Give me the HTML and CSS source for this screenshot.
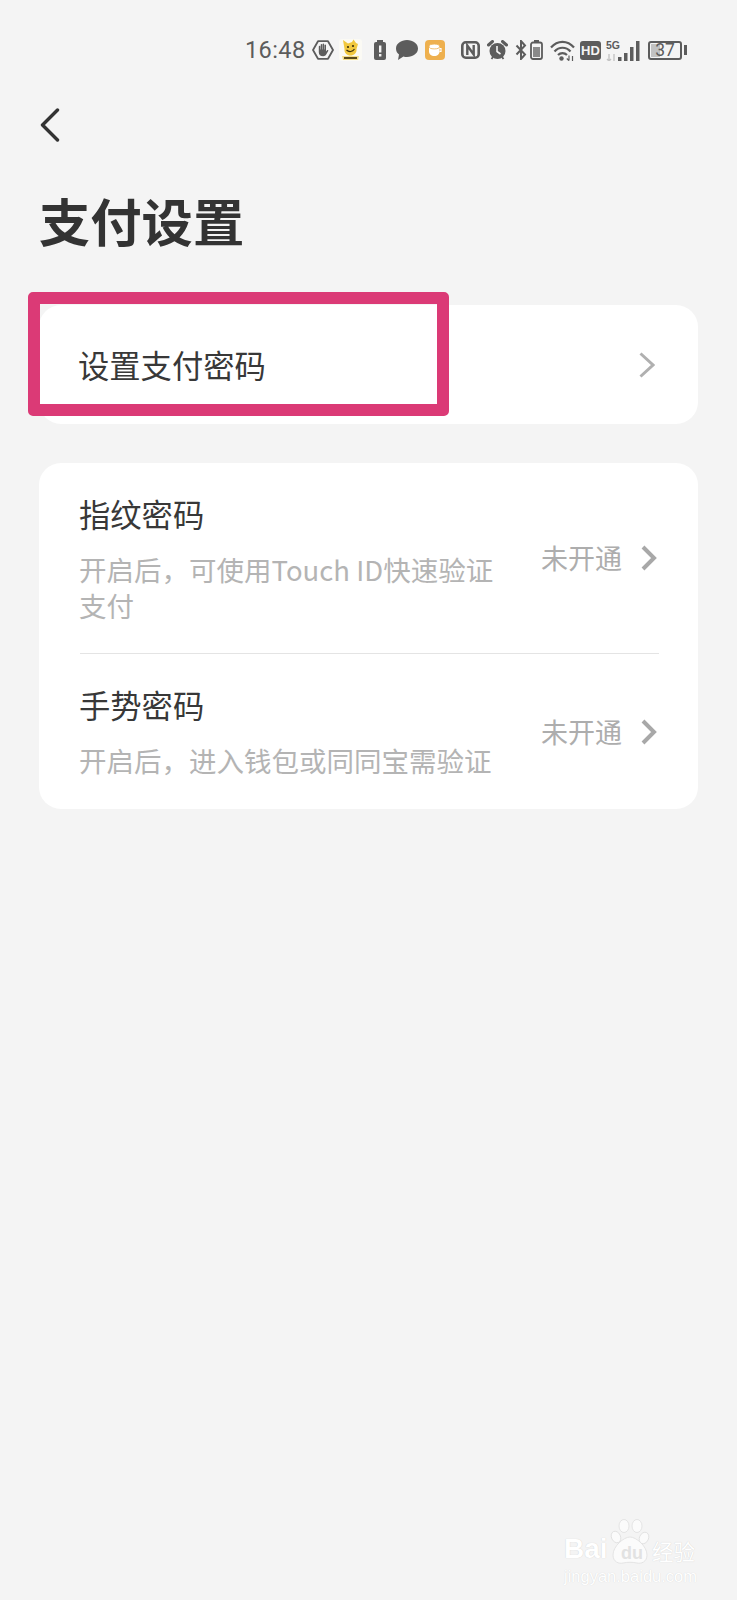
FILE: index.html
```html
<!DOCTYPE html>
<html lang="zh-CN">
<head>
<meta charset="utf-8">
<title>支付设置</title>
<link rel="stylesheet" href="styles.css">
</head>
<body>
<div class="page">
  <header class="status">
    <span class="time">16:48</span>
    <svg class="ic ic-hex" viewBox="0 0 22 20"><path d="M6 1.200h10L21 10l-5 8.800H6L1 10z" fill="none" stroke="#5c5c5c" stroke-width="1.800" stroke-linejoin="round"/><path d="M6.800 6.500c0-1 1.500-1 1.500 0v3h.4V4.800c0-1 1.500-1 1.500 0v4.700h.4V4.300c0-1 1.500-1 1.500 0v5.200h.4V5.200c0-1 1.500-1 1.500 0v6.300l1-1.300c.7-.7 1.700 0 1.200.8l-2 3.500c-.7 1-1.500 1.700-3 1.700-2.800 0-4.400-1.600-4.400-4z" fill="#5c5c5c"/></svg>
    <svg class="ic ic-sticker" viewBox="0 0 23 22"><rect width="23" height="22" rx="3" fill="#fbfaf4"/><path d="M4 1l5 3.500L13 3l1.500-2.500L17 4l2 1-1.500 5c.5 4-2.500 6.500-6 6.500S5 14 5.500 10z" fill="#f1c83f"/><circle cx="9" cy="8" r="1.100" fill="#3a2e0c"/><circle cx="14" cy="7" r="1.100" fill="#3a2e0c"/><path d="M7.500 11c2.500 2.500 6 2 8-1" fill="none" stroke="#3a2e0c" stroke-width="1.100"/><path d="M3 17h17l-1 4H4z" fill="#f3dc88"/><rect x="5" y="18" width="13" height="2" fill="#5a4a1c"/></svg>
    <svg class="ic ic-alert" viewBox="0 0 14 20"><rect x="4" y="0" width="6" height="2" fill="#5c5c5c"/><rect x="1" y="2" width="12" height="18" rx="2" fill="#5c5c5c"/><rect x="6" y="5.500" width="2.400" height="7" fill="#f4f4f4"/><rect x="6" y="14" width="2.400" height="2.500" fill="#f4f4f4"/></svg>
    <svg class="ic ic-chat" viewBox="0 0 22 20"><path d="M11 0c6 0 11 3.600 11 8.500S17 17 11 17c-1.300 0-2.500-.1-3.600-.5L2 20l1-5.500C1 13 0 11 0 8.500 0 3.600 5 0 11 0z" fill="#5c5c5c"/></svg>
    <svg class="ic ic-cup" viewBox="0 0 20 20"><rect width="20" height="20" rx="4" fill="#eeb04e"/><path d="M4 7h10.500v4.500c0 2.500-2 4.500-5.200 4.500S4 14 4 11.500z" fill="#fff"/><ellipse cx="9.300" cy="6.500" rx="5.200" ry="2.400" fill="#fff" stroke="#eeb04e" stroke-width=".8"/><path d="M14.500 8.500h1.500v3h-1.500" fill="none" stroke="#fff" stroke-width="1.200"/></svg>
    <svg class="ic ic-nfc" viewBox="0 0 19 18"><rect x="1.300" y="1.300" width="16.400" height="15.400" rx="3.500" fill="none" stroke="#5c5c5c" stroke-width="2.600"/><path d="M6.300 14V4.500l6.400 9V4" fill="none" stroke="#5c5c5c" stroke-width="2.400"/></svg>
    <svg class="ic ic-alarm" viewBox="0 0 21 20"><circle cx="10.500" cy="11" r="8" fill="#5c5c5c"/><path d="M1.500 5l4-3.500M19.500 5l-4-3.500" stroke="#5c5c5c" stroke-width="3" stroke-linecap="round"/><path d="M4.500 19l1.500-2M16.500 19l-1.500-2" stroke="#5c5c5c" stroke-width="1.800"/><path d="M10 6v5.500l3.500 2.500" fill="none" stroke="#f4f4f4" stroke-width="1.600"/></svg>
    <svg class="ic ic-bt" viewBox="0 0 12 20"><path d="M1.500 5.500l8.500 9-4 4.500V1l4 4.500-8.500 9" fill="none" stroke="#5c5c5c" stroke-width="2"/></svg>
    <svg class="ic ic-batt" viewBox="0 0 13 20"><rect x="4" y="0" width="5" height="2" fill="#5c5c5c"/><rect x="1" y="2.500" width="11" height="16.500" rx="2" fill="none" stroke="#5c5c5c" stroke-width="1.800"/><rect x="3" y="7" width="7" height="10" fill="#8a8a8a"/></svg>
    <svg class="ic ic-wifi" viewBox="0 0 25 22"><path d="M1 8.500c6.500-7.500 16.500-7.500 23 0M4.500 12.500c4.500-5 11.500-5 16 0M8 16c2.500-2.500 6.500-2.500 9 0" fill="none" stroke="#5c5c5c" stroke-width="2.200"/><circle cx="11.500" cy="19.500" r="2.200" fill="#5c5c5c"/><path d="M19 16.500v5M16.800 19.500l2.200 2.200M22.500 22v-5" stroke="#5c5c5c" stroke-width="1.200" fill="none"/></svg>
    <span class="hd">HD</span>
    <span class="net">
      <span class="net-label">5G</span>
      <svg class="ic-signal" viewBox="0 0 34 21"><path d="M3 14v7M1 19l2 2 2-2M8 21v-7" fill="none" stroke="#c4c4c4" stroke-width="1.400"/><path d="M12 17h3.500v4H12zM18 13h3.500v8H18zM24 7h3.500v14H24zM30 1h3.500v20H30z" fill="#5c5c5c"/></svg>
    </span>
    <span class="battery"><span class="battery-fill"></span><span class="battery-num">37</span></span>
    <span class="battery-tip"></span>
  </header>

  <nav class="nav">
    <svg class="back" viewBox="0 0 20 34"><path d="M17.500 2L2.500 17l15 15" fill="none" stroke="#333" stroke-width="3.400" stroke-linecap="round" stroke-linejoin="round"/></svg>
  </nav>

  <h1 class="title">支付设置</h1>

  <section class="card card-single">
    <div class="row-single">
      <span class="row-title">设置支付密码</span>
      <svg class="chev-thin" viewBox="0 0 16 26"><path d="M1.500 1.500L14 13 1.500 24.500" fill="none" stroke="#b0b0b0" stroke-width="3"/></svg>
    </div>
    <div class="highlight"></div>
  </section>

  <section class="card">
    <div class="row row-first">
      <div class="row-text">
        <div class="row-title">指纹密码</div>
        <div class="row-sub">开启后，可使用Touch ID快速验证支付</div>
      </div>
      <div class="row-state">
        <span>未开通</span>
        <svg class="chev" viewBox="0 0 16 26"><path d="M2 2l11 11L2 24" fill="none" stroke="#a8a8a8" stroke-width="4"/></svg>
      </div>
    </div>
    <div class="row row-last">
      <div class="row-text">
        <div class="row-title">手势密码</div>
        <div class="row-sub">开启后，进入钱包或同同宝需验证</div>
      </div>
      <div class="row-state">
        <span>未开通</span>
        <svg class="chev" viewBox="0 0 16 26"><path d="M2 2l11 11L2 24" fill="none" stroke="#a8a8a8" stroke-width="4"/></svg>
      </div>
    </div>
  </section>

  <footer class="mark">
    <div class="mark-top">
      <span class="mark-bai">Bai</span>
      <svg class="mark-paw" viewBox="0 0 40 46"><g fill="#fbfbfb" stroke="#dedede" stroke-width=".8"><ellipse cx="6" cy="18" rx="4.500" ry="6" transform="rotate(-25 6 18)"/><ellipse cx="14" cy="7" rx="5" ry="6.500"/><ellipse cx="27" cy="7" rx="5" ry="6.500"/><ellipse cx="34" cy="19" rx="4.500" ry="6" transform="rotate(25 34 19)"/><path d="M20 18c6 0 17 9 17 18 0 7-6 9-10 8-5-1-9-1-14 0-4 1-10-1-10-8 0-9 11-18 17-18z"/></g></svg>
      <span class="mark-du">du</span>
      <span class="mark-jy">经验</span>
    </div>
    <div class="mark-url">jingyan.baidu.com</div>
  </footer>
</div>
</body>
</html>
```

FILE: styles.css
```css
* {
  box-sizing: border-box;
}

html,
body {
  margin: 0;
  padding: 0;
}

body {
  background: #f4f4f4;
  font-family: "Noto Sans CJK SC", "Noto Sans", sans-serif;
  color: #333;
}

.page {
  position: relative;
  width: 737px;
  height: 1600px;
  overflow: hidden;
}

/* status bar */
.status {
  display: flex;
  align-items: center;
  height: 22px;
  margin-top: 39px;
  padding-left: 245px;
  color: #5c5c5c;
}

.time {
  width: 61px;
  font-family: Roboto, sans-serif;
  font-size: 23.500px;
  letter-spacing: 0.4px;
  line-height: 22px;
}

.ic {
  display: block;
  flex: none;
  height: 20px;
}

.ic-hex { width: 22px; margin-left: 6px; }
.ic-sticker { width: 23px; height: 22px; margin-left: 5px; }
.ic-alert { width: 14px; margin-left: 11px; }
.ic-chat { width: 22px; margin-left: 9px; }
.ic-cup { width: 20px; margin-left: 7px; }
.ic-nfc { width: 19px; height: 18px; margin-left: 16px; }
.ic-alarm { width: 21px; margin-left: 7px; }
.ic-bt { width: 12px; margin-left: 7px; }
.ic-batt { width: 13px; margin-left: 3px; }
.ic-wifi { width: 25px; height: 22px; margin-left: 7px; }

.hd {
  flex: none;
  width: 21px;
  height: 19px;
  margin-left: 5px;
  border-radius: 3px;
  background: #5c5c5c;
  color: #f4f4f4;
  font-family: "Liberation Sans", sans-serif;
  font-size: 13px;
  font-weight: 700;
  line-height: 19px;
  text-align: center;
}

.net {
  position: relative;
  flex: none;
  width: 34px;
  height: 21px;
  margin-left: 5px;
}

.net-label {
  position: absolute;
  top: 0;
  left: 0;
  font-family: "Liberation Sans", sans-serif;
  font-size: 10.500px;
  font-weight: 700;
  line-height: 10px;
}

.ic-signal {
  position: absolute;
  right: 0;
  bottom: 0;
  width: 34px;
  height: 21px;
}

.battery {
  position: relative;
  flex: none;
  width: 34px;
  height: 19px;
  margin-left: 8px;
  border: 2px solid #5c5c5c;
  border-radius: 3px;
  overflow: hidden;
}

.battery-fill {
  position: absolute;
  top: 1px;
  bottom: 1px;
  left: 1px;
  width: 9px;
  background: #c2c2c2;
}

.battery-num {
  position: relative;
  display: block;
  font-family: Roboto, sans-serif;
  font-size: 17.500px;
  line-height: 15px;
  text-align: center;
}

.battery-tip {
  flex: none;
  width: 3px;
  height: 10px;
  margin-left: 2px;
  background: #5c5c5c;
}

/* navigation and heading */
.nav {
  height: 48px;
  margin-top: 47px;
  padding-left: 40px;
}

.back {
  display: block;
  width: 20px;
  height: 34px;
}

.title {
  margin: 30px 0 0 39px;
  font-size: 51.300px;
  font-weight: 700;
  line-height: 68px;
  color: #333;
}

/* settings cards */
.card {
  position: relative;
  width: 659px;
  margin: 39px 0 0 39px;
  border-radius: 22px;
  background: #fff;
}

.card-single {
  margin-top: 51px;
}

.row-single {
  display: flex;
  align-items: center;
  justify-content: space-between;
  height: 119px;
  padding: 0 43px 0 39px;
}

.row-title {
  font-size: 31.300px;
  line-height: 44px;
  color: #383838;
}

.chev-thin {
  display: block;
  width: 16px;
  height: 26px;
}

/* frame drawn on top of the first row */
.highlight {
  position: absolute;
  top: -13px;
  left: -11px;
  width: 421px;
  height: 124px;
  border: 12px solid #db3a76;
  border-radius: 5px;
}

.row {
  display: flex;
  align-items: center;
  justify-content: space-between;
  margin: 0 39px 0 41px;
  padding: 29px 2px 30px 0;
}

.row-first {
  border-bottom: 1px solid #e4e4e4;
}

.row-last {
  padding: 29px 2px 31px 0;
}

.row-last .row-state {
  margin-top: 2px;
}

.row-text {
  width: 422px;
  margin-left: -1px;
}

.row-sub {
  margin-top: 15px;
  font-size: 27.500px;
  line-height: 36px;
  color: #b4b4b4;
}

.row-state {
  display: flex;
  align-items: center;
  gap: 19px;
  font-size: 27px;
  line-height: 36px;
  color: #adadad;
}

.chev {
  display: block;
  width: 16px;
  height: 26px;
}

/* watermark in the lower corner */
.mark {
  position: absolute;
  top: 1524px;
  left: 564px;
  width: 136px;
  color: #fff;
}

.mark-top {
  position: relative;
  height: 42px;
}

.mark-bai {
  position: absolute;
  top: 10px;
  left: 0;
  font-family: "Liberation Sans", sans-serif;
  font-size: 28px;
  font-weight: 700;
  line-height: 30px;
  text-shadow: 0 0 1px rgba(0, 0, 0, 0.18);
}

.mark-paw {
  position: absolute;
  top: -5px;
  left: 46px;
  width: 40px;
  height: 46px;
}

.mark-du {
  position: absolute;
  top: 20px;
  left: 57px;
  font-family: "Liberation Sans", sans-serif;
  font-size: 18px;
  font-weight: 700;
  line-height: 18px;
  color: #e2e2e2;
}

.mark-jy {
  position: absolute;
  top: 13px;
  left: 88px;
  font-size: 21.500px;
  line-height: 28px;
  text-shadow: 0 0 1px rgba(0, 0, 0, 0.18);
}

.mark-url {
  font-family: "Liberation Sans", sans-serif;
  font-size: 16.500px;
  line-height: 20px;
  text-shadow: 0 0 1px rgba(0, 0, 0, 0.15);
}
```
